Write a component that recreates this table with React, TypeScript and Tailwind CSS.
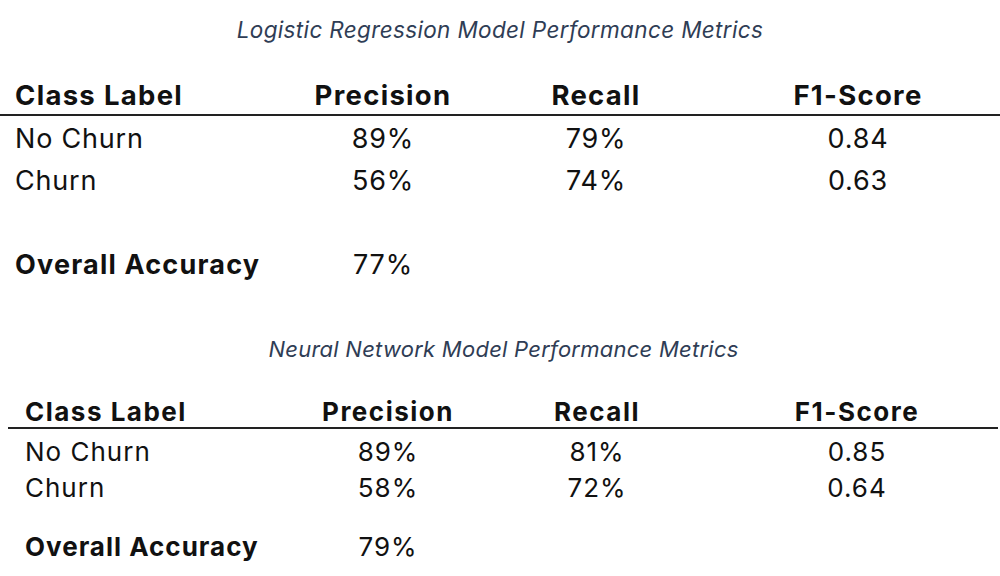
const font = { fontFamily: 'Inter, "Noto Sans", sans-serif' }

type Row = { label: string; precision: string; recall: string; f1: string }

const logistic: Row[] = [
  { label: 'No Churn', precision: '89%', recall: '79%', f1: '0.84' },
  { label: 'Churn', precision: '56%', recall: '74%', f1: '0.63' },
]

const neural: Row[] = [
  { label: 'No Churn', precision: '89%', recall: '81%', f1: '0.85' },
  { label: 'Churn', precision: '58%', recall: '72%', f1: '0.64' },
]

export default function App() {
  return (
    <div className="w-[1000px] h-[576px] overflow-hidden bg-white text-[#111]" style={font}>
      {/* Logistic regression */}
      <div className="pt-[10px] h-[50px] text-center italic text-[22.5px] tracking-[0.35px] leading-[40px] text-[#2f3d55]">
        Logistic Regression Model Performance Metrics
      </div>
      <div className="mt-[26px] w-[1007px]">
        <div className="flex h-[40px] items-center font-bold text-[27.5px] tracking-[1.3px] leading-[40px] border-b-2 border-[#222]">
          <div className="w-[283px] shrink-0 pl-[15px]">Class Label</div>
          <div className="w-[200px] shrink-0 text-center">Precision</div>
          <div className="w-[226px] shrink-0 text-center">Recall</div>
          <div className="w-[298px] shrink-0 text-center">F1-Score</div>
        </div>
        <div className="pt-[2px]">
          {logistic.map(r => (
            <div key={r.label} className="flex h-[42px] text-[27px] tracking-[0.8px] leading-[42px]">
              <div className="w-[283px] shrink-0 pl-[15px]">{r.label}</div>
              <div className="w-[200px] shrink-0 text-center">{r.precision}</div>
              <div className="w-[226px] shrink-0 text-center">{r.recall}</div>
              <div className="w-[298px] shrink-0 text-center">{r.f1}</div>
            </div>
          ))}
        </div>
        <div className="flex mt-[42px] h-[42px] text-[27px] leading-[42px]">
          <div className="w-[283px] shrink-0 pl-[15px] font-bold tracking-[1.2px]">Overall Accuracy</div>
          <div className="w-[200px] shrink-0 text-center tracking-[0.8px]">77%</div>
        </div>
      </div>

      {/* Neural network */}
      <div className="mt-[43px] h-[40px] text-center italic text-[22px] tracking-[0.25px] leading-[40px] text-[#2f3d55] pl-[7px]">
        Neural Network Model Performance Metrics
      </div>
      <div className="mt-[25px] ml-[8px] w-[990px]">
        <div className="flex h-[35px] font-bold text-[26px] tracking-[1.5px] leading-[35px] border-b-2 border-[#222]">
          <div className="w-[280px] shrink-0 pl-[17px]">Class Label</div>
          <div className="w-[200px] shrink-0 text-center">Precision</div>
          <div className="w-[218px] shrink-0 text-center">Recall</div>
          <div className="w-[302px] shrink-0 text-center">F1-Score</div>
        </div>
        <div className="pt-[5px]">
          {neural.map(r => (
            <div key={r.label} className="flex h-[36px] text-[26px] tracking-[1px] leading-[36px]">
              <div className="w-[280px] shrink-0 pl-[17px]">{r.label}</div>
              <div className="w-[200px] shrink-0 text-center">{r.precision}</div>
              <div className="w-[218px] shrink-0 text-center">{r.recall}</div>
              <div className="w-[302px] shrink-0 text-center">{r.f1}</div>
            </div>
          ))}
        </div>
        <div className="flex mt-[23px] h-[36px] text-[26px] leading-[36px]">
          <div className="w-[280px] shrink-0 pl-[17px] font-bold tracking-[1px]">Overall Accuracy</div>
          <div className="w-[200px] shrink-0 text-center tracking-[1px]">79%</div>
        </div>
      </div>
    </div>
  )
}
